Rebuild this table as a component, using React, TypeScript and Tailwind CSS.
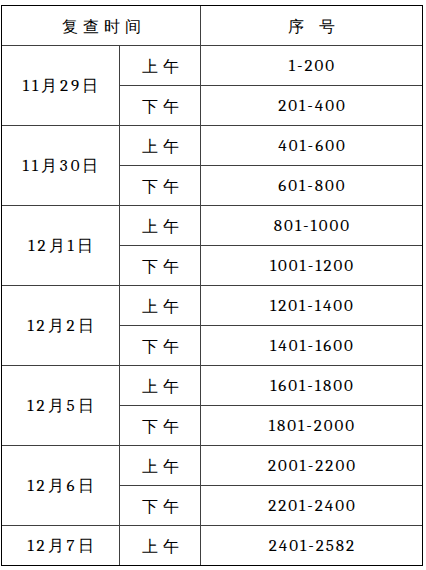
const rows: { date: string; items: [string, string][] }[] = [
  { date: '11月29日', items: [['上午', '1-200'], ['下午', '201-400']] },
  { date: '11月30日', items: [['上午', '401-600'], ['下午', '601-800']] },
  { date: '12月1日', items: [['上午', '801-1000'], ['下午', '1001-1200']] },
  { date: '12月2日', items: [['上午', '1201-1400'], ['下午', '1401-1600']] },
  { date: '12月5日', items: [['上午', '1601-1800'], ['下午', '1801-2000']] },
  { date: '12月6日', items: [['上午', '2001-2200'], ['下午', '2201-2400']] },
  { date: '12月7日', items: [['上午', '2401-2582']] },
];

// split a label into latin / CJK runs so each gets its own font
function Mixed({ text, spread }: { text: string; spread?: boolean }) {
  const runs = text.match(/[\u4e00-\u9fff]+|[^\u4e00-\u9fff]+/g) ?? [];
  return (
    <span className={`${spread ? 'tracking-[3px] pl-[3px]' : 'tracking-[2px] pl-[2px]'} leading-none`}>
      {runs.map((r, i) =>
        /[\u4e00-\u9fff]/.test(r) ? (
          <span key={i} className="font-sans font-light text-[16px]">
            {r}
          </span>
        ) : (
          <span key={i} className="font-serif text-[17px]">
            {r}
          </span>
        )
      )}
    </span>
  );
}

function Cjk({ text }: { text: string }) {
  return (
    <span className="font-sans font-light text-[16px] leading-none tracking-[5px] pl-[5px]">
      {text}
    </span>
  );
}

export default function App() {
  const cell = 'flex items-center justify-center text-black';
  const inner = 'border-[#404040]';

  return (
    <div className="bg-white w-[426px] h-[570px] pt-[5px] pl-[1px]">
      <div className="w-[422px] border border-black grid grid-cols-[118px_81px_221px] grid-rows-[repeat(13,40px)_39px]">
        <div className={`${cell} ${inner} col-span-2 border-r border-b`}>
          <Cjk text="复查时间" />
        </div>
        <div className={`${cell} ${inner} border-b`}>
          <Cjk text="序 号" />
        </div>

        {rows.map((g, gi) => {
          const last = gi === rows.length - 1;
          return [
            <div
              key={g.date}
              className={`${cell} ${inner} border-r ${last ? '' : 'border-b'} ${g.items.length > 1 ? 'row-span-2' : ''}`}
            >
              <Mixed text={g.date} spread />
            </div>,
            ...g.items.flatMap(([half, range]) => [
              <div key={g.date + half} className={`${cell} ${inner} border-r ${last ? '' : 'border-b'}`}>
                <Cjk text={half} />
              </div>,
              <div key={g.date + range} className={`${cell} ${inner} ${last ? '' : 'border-b'}`}>
                <Mixed text={range} />
              </div>,
            ]),
          ];
        })}
      </div>
    </div>
  );
}
